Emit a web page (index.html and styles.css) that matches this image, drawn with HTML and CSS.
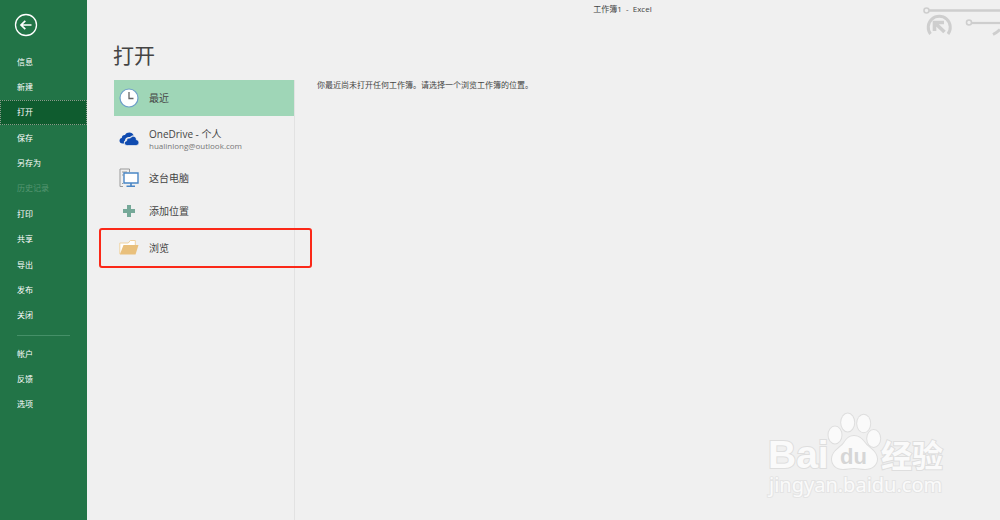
FILE: index.html
```html
<!DOCTYPE html>
<html lang="zh-CN">
<head>
<meta charset="utf-8">
<title>工作簿1 - Excel</title>
<link rel="stylesheet" href="styles.css">
</head>
<body>

<div class="sidebar">
	<button type="button" class="back" aria-label="返回">
		<svg width="24" height="24" viewBox="0 0 24 24" fill="none" stroke="#fff">
			<circle cx="12" cy="12" r="10.5" stroke-width="1.3"/>
			<path d="M17.500 12H7.5M11.3 7.800L7 12l4.300 4.200" stroke-width="1.7"/>
		</svg>
	</button>
	<nav>
		<ul class="menu menu-file">
			<li><a href="#">信息</a></li>
			<li><a href="#">新建</a></li>
			<li><a href="#" class="active">打开</a></li>
			<li><a href="#">保存</a></li>
			<li><a href="#">另存为</a></li>
			<li><a class="disabled">历史记录</a></li>
			<li><a href="#">打印</a></li>
			<li><a href="#">共享</a></li>
			<li><a href="#">导出</a></li>
			<li><a href="#">发布</a></li>
			<li><a href="#">关闭</a></li>
		</ul>
		<hr>
		<ul class="menu menu-account">
			<li><a href="#">帐户</a></li>
			<li><a href="#">反馈</a></li>
			<li><a href="#">选项</a></li>
		</ul>
	</nav>
</div>

<div class="main">
	<header class="titlebar">工作簿1 &nbsp;-&nbsp; Excel</header>
	<svg class="circuit" width="80" height="36" viewBox="0 0 80 36" fill="none" stroke="#cecece">
		<circle cx="6.5" cy="10.5" r="2.5" stroke-width="1.6"/>
		<path d="M9 10.5H80" stroke-width="2.4"/>
		<circle cx="49" cy="22.5" r="2.5" stroke-width="1.6"/>
		<path d="M52 23H80" stroke-width="2.2"/>
		<path d="M10.5 34A11 11 0 1 1 28 34" stroke-width="3"/>
		<path d="M14.5 31V22.5H24M15 23L24.5 32" stroke-width="3.6"/>
		<path d="M73 34.5Q77 32.5 80 29.5" stroke-width="3"/>
	</svg>

	<h1>打开</h1>
	<div class="content">
		<div class="places">
			<button type="button" class="place recent">
				<svg width="20" height="20" viewBox="0 0 20 20">
					<circle cx="10" cy="10" r="9" fill="#fff" stroke="#6e9fc9" stroke-width="1.2"/>
					<path d="M10 4v6.5h4.5" fill="none" stroke="#666" stroke-width="1.3"/>
				</svg>
				<span>最近</span>
			</button>
			<button type="button" class="place onedrive">
				<svg width="20" height="20" viewBox="0 0 20 20">
					<path d="M5.5 14.5H3.5C1.7 14.5.5 13.3.5 11.7.5 10.2 1.5 9.2 2.8 9 2.8 7 4.2 5.8 6 6 7 4.2 8.6 3.5 10.4 3.5c2 0 3.6 1.1 4.3 3-1.5-.2-2.8.3-3.7 1.6-2.7-.5-4.9 1-5 3.4-1.4.9-1.5 2-.5 3z" fill="#0f4bb0"/>
					<path d="M8.3 16.5c-1.8 0-2.8-1-2.8-2.3 0-1.2.8-2.1 2.1-2.3-.1-2 1.5-3.2 3.7-2.8 1-1.6 2.4-2.1 3.8-1.7 1.5.4 2.3 1.7 2.2 3.3 1.6.3 2.6 1.4 2.6 3s-1.3 2.8-3 2.8z" fill="#0f4bb0" stroke="#f0f0f0" stroke-width=".7"/>
				</svg>
				<span>OneDrive - 个人<small>hualinlong@outlook.com</small></span>
			</button>
			<button type="button" class="place">
				<svg width="20" height="20" viewBox="0 0 20 20" fill="none">
					<path d="M4 18.500H1V1h9.500v3M3 4h5M3 7h1.500M3 15.500h1" stroke="#9a9a9a"/>
					<path d="M5 5h14v10H5z" fill="#fff" stroke="#4a86c5" stroke-width="1.4"/>
					<path d="M12 15v3M7.500 18.200h8.500" stroke="#4a86c5" stroke-width="1.6"/>
				</svg>
				<span>这台电脑</span>
			</button>
			<button type="button" class="place">
				<svg width="20" height="20" viewBox="0 0 20 20">
					<path d="M8 4h4v4h4v4h-4v4H8v-4H4V8h4z" fill="#75a898"/>
				</svg>
				<span>添加位置</span>
			</button>
			<button type="button" class="place browse">
				<svg width="20" height="20" viewBox="0 0 20 20">
					<path d="M.8 16V5h8.500l2-2.500h5V7" fill="#fff" stroke="#efd3a2"/>
					<path d="M4.500 7H19.500L16.500 16.500H.8z" fill="#e9c07c"/>
				</svg>
				<span>浏览</span>
			</button>
		</div>
		<p class="message">你最近尚未打开任何工作簿。请选择一个浏览工作簿的位置。</p>
	</div>

	<svg class="watermark" width="190" height="92" viewBox="0 0 190 92">
		<text x="4" y="61" class="latin">Bai</text>
		<ellipse cx="71" cy="28" rx="6.5" ry="8.5"/>
		<ellipse cx="83.7" cy="15.5" rx="6.5" ry="9"/>
		<ellipse cx="99.7" cy="16.5" rx="6.5" ry="8.7"/>
		<ellipse cx="109.7" cy="31.5" rx="6.5" ry="8.5"/>
		<path d="M90 29c-5 0-7.500 3-10 7-3 4.500-12 8-12 16 0 6 4.500 10 11 10 4 0 7-1 11-1s7 1 11 1c7 0 12-4 12-10 0-8-9-11.500-12-16-3-4-6-7-11-7z"/>
		<text x="117" y="60" class="hanzi">经验</text>
		<text x="76" y="57" class="du">du</text>
		<text x="5" y="85" class="site">jingyan.baidu.com</text>
	</svg>
</div>

</body>
</html>
```

FILE: styles.css
```css
* {
	box-sizing: border-box;
}

body {
	margin: 0;
	min-height: 100vh;
	display: flex;
	background: #f0f0f0;
	color: #444;
	font-family: "Open Sans", "Noto Sans CJK SC", sans-serif;
	font-size: 10px;
}

button {
	border: 0;
	padding: 0;
	background: none;
	color: inherit;
	font: inherit;
	text-align: left;
	cursor: pointer;
}

svg {
	display: block;
	flex: none;
}

/* green backstage menu */
.sidebar {
	flex: none;
	width: 87px;
	padding-top: 13px;
	background: #227447;
}

.back {
	display: block;
	margin-left: 14px;
}

.menu {
	display: grid;
	grid-auto-rows: 1fr;
	margin: 0;
	padding: 0;
	list-style: none;
}

.menu-file {
	height: 279px;
	margin-top: 12px;
}

.menu-account {
	height: 76px;
}

.menu a {
	display: flex;
	align-items: center;
	height: 100%;
	padding-left: 16px;
	border: 1px solid transparent;
	color: #fff;
	font-size: 8px;
	line-height: 12px;
	text-decoration: none;
}

.menu a.active {
	background: #0f5c2f;
	border: 1px dotted #8a9a8a;
}

.menu a.disabled {
	color: #569672;
}

.sidebar hr {
	height: 1px;
	margin: 7px 17px 5px;
	border: 0;
	background: #459068;
}

/* right side */
.main {
	position: relative;
	flex: 1;
	min-width: 0;
}

.titlebar {
	height: 20px;
	padding-left: 158px;
	font-size: 8px;
	line-height: 18px;
	text-align: center;
}

.circuit {
	position: absolute;
	top: 0;
	right: 0;
}

h1 {
	margin: 20px 0 9px 26px;
	font-size: 21px;
	font-weight: normal;
	line-height: 31px;
}

.content {
	display: flex;
	min-height: calc(100vh - 80px);
	padding-left: 27px;
}

.places {
	flex: none;
	width: 181px;
	border-right: 1px solid #e2e2e2;
}

.place {
	display: flex;
	align-items: center;
	gap: 10px;
	width: 100%;
	height: 33px;
	padding-left: 5px;
	line-height: 14px;
}

.place small {
	display: block;
	color: #777;
	font-size: 8px;
	line-height: 10px;
}

.recent {
	height: 36px;
	background: #9fd6b7;
}

.onedrive {
	height: 45px;
}

.browse {
	position: relative;
	height: 40px;
	margin-top: 1px;
}

/* highlight drawn over the pane edge */
.browse::after {
	content: "";
	position: absolute;
	top: 0;
	left: -15px;
	right: -18px;
	bottom: 0;
	border: 2px solid #fb2818;
	border-radius: 3px;
}

.message {
	margin: 0;
	padding-left: 22px;
	font-size: 8px;
	line-height: 10px;
}

.watermark {
	position: absolute;
	right: 46px;
	bottom: 21px;
	fill: #fafafa;
	stroke: #dedede;
	stroke-width: 2px;
	paint-order: stroke;
}

.latin {
	font: bold 39px "Liberation Sans", sans-serif;
}

.hanzi {
	font: bold 31px "Noto Sans CJK SC", sans-serif;
}

.du {
	font: bold 22px "Liberation Sans", sans-serif;
	fill: #d6d6d6;
	stroke: none;
}

.site {
	font: 20px "Noto Sans", sans-serif;
	stroke: #e4e4e4;
}
```
